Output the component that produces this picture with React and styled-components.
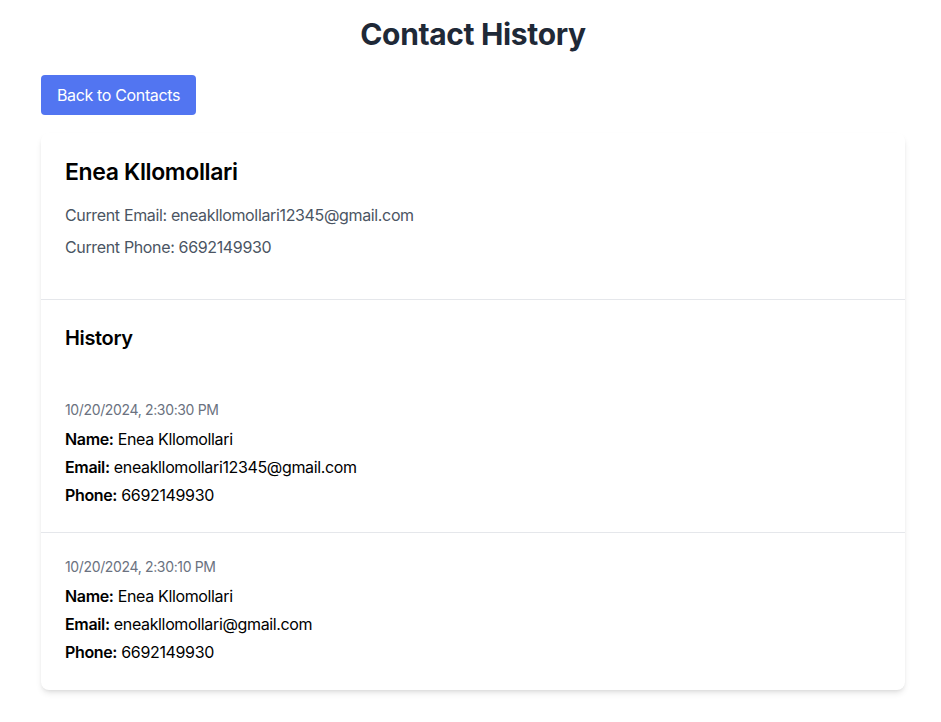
import React from 'react';
import styled, { createGlobalStyle } from 'styled-components';

const GlobalStyle = createGlobalStyle`
  body {
    margin: 0;
    background: #ffffff;
    font-family: Inter, "Noto Sans", "Liberation Sans", sans-serif;
    letter-spacing: -0.022em;
    -webkit-font-smoothing: antialiased;
  }
`;

const Page = styled.div`
  padding: 16px 36px 32px 41px;
  width: 864px;
`;

const Title = styled.h1`
  margin: 0 0 23px;
  font-size: 30px;
  line-height: 36px;
  font-weight: 700;
  color: #1f2937;
  text-align: center;
`;

const BackButton = styled.button`
  display: block;
  height: 40px;
  padding: 0 16px;
  margin-bottom: 18px;
  border: none;
  border-radius: 4px;
  background: #5275f1;
  color: #ffffff;
  font-family: inherit;
  font-size: 16px;
  letter-spacing: inherit;
  cursor: pointer;
`;

const Card = styled.div`
  background: #ffffff;
  border-radius: 8px;
  box-shadow: 0 4px 6px -1px rgba(0, 0, 0, 0.1), 0 2px 4px -2px rgba(0, 0, 0, 0.1);
  overflow: hidden;
`;

const Section = styled.div`
  padding: 24px;
  border-bottom: ${p => (p.$divider ? '1px solid #e5e7eb' : 'none')};
`;

const ContactName = styled.h2`
  margin: 0 0 16px;
  font-size: 23px;
  line-height: 30px;
  font-weight: 600;
  color: #000000;
`;

const InfoLine = styled.p`
  margin: 0 0 8px;
  font-size: 16px;
  line-height: 24px;
  color: #4b5563;

  &:last-child {
    margin-bottom: 16px;
  }
`;

const SectionTitle = styled.h3`
  margin: 0;
  font-size: 20px;
  line-height: 28px;
  font-weight: 600;
  color: #000000;
`;

const Entry = styled.div`
  padding: 24px 24px ${p => (p.$last ? '26px' : '25px')};
  border-bottom: ${p => (p.$last ? 'none' : '1px solid #e5e7eb')};
`;

const Timestamp = styled.div`
  font-size: 14px;
  line-height: 20px;
  color: #6b7280;
  margin-bottom: 7px;
`;

const Field = styled.div`
  font-size: 16px;
  line-height: 24px;
  color: #000000;
  margin-bottom: 4px;

  &:last-child {
    margin-bottom: 0;
  }

  strong {
    font-weight: 600;
  }
`;

const history = [
  {
    date: '10/20/2024, 2:30:30 PM',
    name: 'Enea Kllomollari',
    email: 'eneakllomollari12345@gmail.com',
    phone: '6692149930',
  },
  {
    date: '10/20/2024, 2:30:10 PM',
    name: 'Enea Kllomollari',
    email: 'eneakllomollari@gmail.com',
    phone: '6692149930',
  },
];

const App = () => {
  return (
    <>
      <GlobalStyle />
      <Page>
        <Title>Contact History</Title>
        <BackButton>Back to Contacts</BackButton>
        <Card>
          <Section $divider>
            <ContactName>Enea Kllomollari</ContactName>
            <InfoLine>Current Email: eneakllomollari12345@gmail.com</InfoLine>
            <InfoLine>Current Phone: 6692149930</InfoLine>
          </Section>
          <Section>
            <SectionTitle>History</SectionTitle>
          </Section>
          {history.map((item, i) => (
            <Entry key={item.date} $last={i === history.length - 1}>
              <Timestamp>{item.date}</Timestamp>
              <Field><strong>Name:</strong> {item.name}</Field>
              <Field><strong>Email:</strong> {item.email}</Field>
              <Field><strong>Phone:</strong> {item.phone}</Field>
            </Entry>
          ))}
        </Card>
      </Page>
    </>
  );
};

export default App;
